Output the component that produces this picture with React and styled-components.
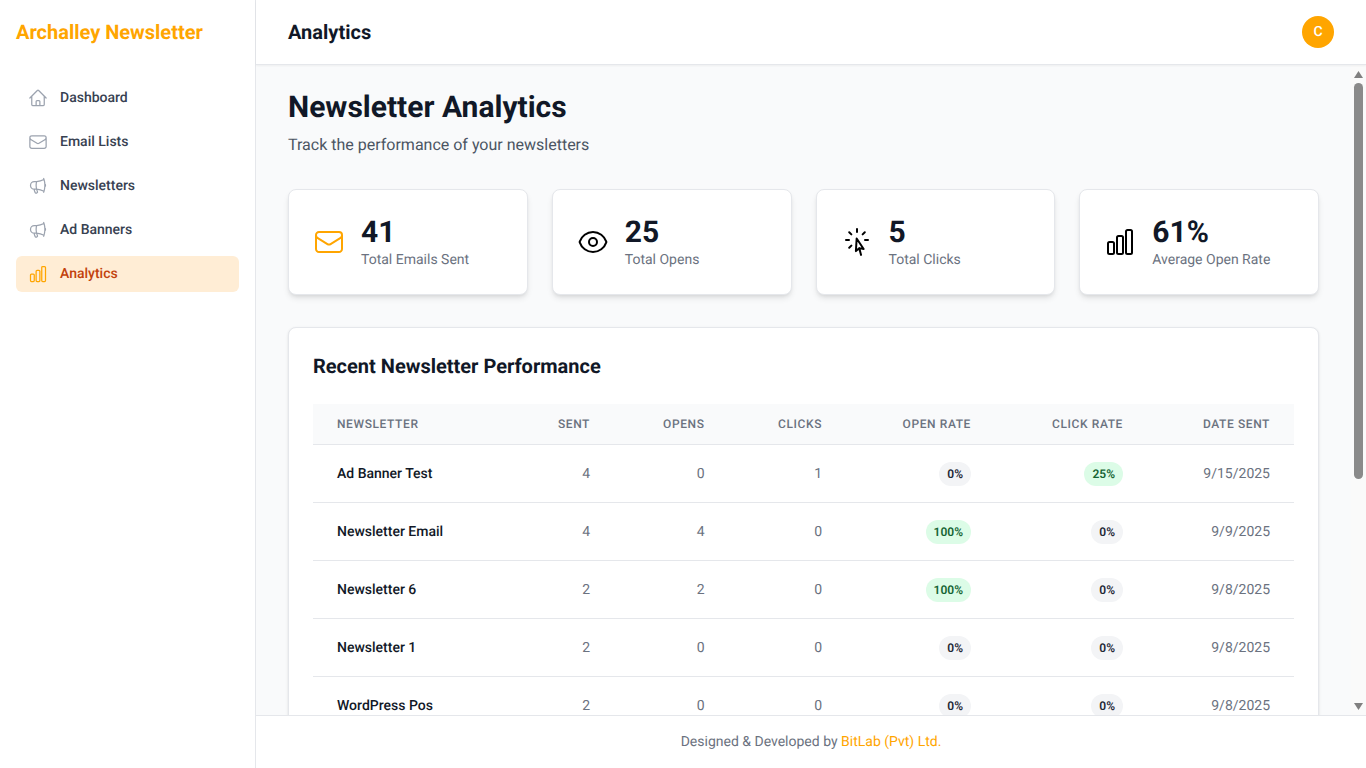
import React from "react";
import styled, { createGlobalStyle } from "styled-components";
import {
  HiOutlineHome,
  HiOutlineEnvelope,
  HiOutlineMegaphone,
  HiOutlineChartBar,
  HiOutlineEye,
  HiOutlineCursorArrowRays,
} from "react-icons/hi2";

const navItems = [
  { label: "Dashboard", icon: HiOutlineHome },
  { label: "Email Lists", icon: HiOutlineEnvelope },
  { label: "Newsletters", icon: HiOutlineMegaphone },
  { label: "Ad Banners", icon: HiOutlineMegaphone },
  { label: "Analytics", icon: HiOutlineChartBar, active: true },
];

const stats = [
  { value: "41", label: "Total Emails Sent", icon: HiOutlineEnvelope, color: "#ffa500" },
  { value: "25", label: "Total Opens", icon: HiOutlineEye, color: "#000" },
  { value: "5", label: "Total Clicks", icon: HiOutlineCursorArrowRays, color: "#000" },
  { value: "61%", label: "Average Open Rate", icon: HiOutlineChartBar, color: "#000" },
];

const rows = [
  ["Ad Banner Test", 4, 0, 1, 0, 25, "9/15/2025"],
  ["Newsletter Email", 4, 4, 0, 100, 0, "9/9/2025"],
  ["Newsletter 6", 2, 2, 0, 100, 0, "9/8/2025"],
  ["Newsletter 1", 2, 0, 0, 0, 0, "9/8/2025"],
  ["WordPress Pos", 2, 0, 0, 0, 0, "9/8/2025"],
];

const App = () => (
  <>
    <GlobalStyle />
    <Shell>
      <Sidebar>
        <Brand>Archalley Newsletter</Brand>
        <Nav>
          {navItems.map((item) => (
            <NavItem key={item.label} $active={item.active}>
              <item.icon />
              {item.label}
            </NavItem>
          ))}
        </Nav>
      </Sidebar>
      <Body>
        <Header>
          <HeaderTitle>Analytics</HeaderTitle>
          <Avatar>C</Avatar>
        </Header>
        <MainRow>
          <Main>
            <PageTitle>Newsletter Analytics</PageTitle>
            <PageSub>Track the performance of your newsletters</PageSub>
            <StatGrid>
              {stats.map((s) => (
                <StatCard key={s.label}>
                  <StatIcon $color={s.color}>
                    <s.icon />
                  </StatIcon>
                  <div>
                    <StatValue>{s.value}</StatValue>
                    <StatLabel>{s.label}</StatLabel>
                  </div>
                </StatCard>
              ))}
            </StatGrid>
            <TableCard>
              <TableTitle>Recent Newsletter Performance</TableTitle>
              <Table>
                <thead>
                  <tr>
                    <Th $left $width={190}>Newsletter</Th>
                    <Th $width={111}>Sent</Th>
                    <Th $width={114.5}>Opens</Th>
                    <Th $width={117.5}>Clicks</Th>
                    <Th $width={149}>Open Rate</Th>
                    <Th $width={152}>Click Rate</Th>
                    <Th $width={147}>Date Sent</Th>
                  </tr>
                </thead>
                <tbody>
                  {rows.map((r, i) => (
                    <tr key={i}>
                      <NameCell>{r[0]}</NameCell>
                      <Td>{r[1]}</Td>
                      <Td>{r[2]}</Td>
                      <Td>{r[3]}</Td>
                      <Td><Badge $good={r[4] > 0}>{r[4]}%</Badge></Td>
                      <Td><Badge $good={r[5] > 0}>{r[5]}%</Badge></Td>
                      <Td>{r[6]}</Td>
                    </tr>
                  ))}
                </tbody>
              </Table>
            </TableCard>
          </Main>
          <ScrollRail>
            <ScrollArrow>
              <svg width="9" height="7" viewBox="0 0 9 7"><path d="M4.5 0L9 7H0z" fill="#808080" /></svg>
            </ScrollArrow>
            <ScrollThumb />
            <ScrollSpacer />
            <ScrollArrow>
              <svg width="9" height="7" viewBox="0 0 9 7"><path d="M0 0h9L4.5 7z" fill="#808080" /></svg>
            </ScrollArrow>
          </ScrollRail>
        </MainRow>
        <Footer>
          Designed &amp; Developed by&nbsp;<FooterLink>BitLab (Pvt) Ltd.</FooterLink>
        </Footer>
      </Body>
    </Shell>
  </>
);

const GlobalStyle = createGlobalStyle`
  * { box-sizing: border-box; }
  html, body { margin: 0; height: 100%; overflow: hidden; }
  body {
    font-family: Roboto, "Liberation Sans", sans-serif;
    background: #fff;
    text-rendering: geometricPrecision;
  }
`;

const Shell = styled.div`
  display: flex;
  height: 100vh;
`;

const Sidebar = styled.aside`
  width: 256px;
  flex-shrink: 0;
  background: #fff;
  border-right: 1px solid #e5e7eb;
  padding: 0 16px;
`;

const Brand = styled.div`
  height: 64px;
  display: flex;
  align-items: center;
  font-size: 20px;
  font-weight: 700;
  color: #ffa500;
`;

const Nav = styled.nav`
  display: flex;
  flex-direction: column;
  gap: 8px;
  margin-top: 16px;
`;

const NavItem = styled.a`
  display: flex;
  align-items: center;
  gap: 12px;
  padding: 8px 12px;
  border-radius: 6px;
  font-size: 14px;
  line-height: 20px;
  font-weight: 500;
  color: ${(p) => (p.$active ? "#c2410c" : "#374151")};
  background: ${(p) => (p.$active ? "#ffedd5" : "transparent")};

  svg {
    width: 20px;
    height: 20px;
    flex-shrink: 0;
    color: ${(p) => (p.$active ? "#ffa500" : "#9ca3af")};
  }
`;

const Body = styled.div`
  flex: 1;
  min-width: 0;
  display: flex;
  flex-direction: column;
`;

const Header = styled.header`
  height: 65px;
  flex-shrink: 0;
  display: flex;
  align-items: center;
  justify-content: space-between;
  padding: 0 32px;
  background: #fff;
  border-bottom: 1px solid #e5e7eb;
  box-shadow: 0 1px 2px rgba(0, 0, 0, 0.05);
  z-index: 1;
`;

const HeaderTitle = styled.h2`
  margin: 0;
  font-size: 20px;
  font-weight: 700;
  color: #111827;
`;

const Avatar = styled.div`
  width: 32px;
  height: 32px;
  border-radius: 50%;
  background: #ffa500;
  color: #fff;
  font-size: 14px;
  line-height: 20px;
  font-weight: 500;
  display: flex;
  align-items: center;
  justify-content: center;
`;

const MainRow = styled.div`
  flex: 1;
  min-height: 0;
  display: flex;
  background: #f9fafb;
`;

const Main = styled.main`
  flex: 1;
  min-width: 0;
  overflow: hidden;
  padding: 24px 32px;
`;

const ScrollRail = styled.div`
  width: 15px;
  flex-shrink: 0;
  display: flex;
  flex-direction: column;
  align-items: center;
  background: #fafafa;
`;

const ScrollArrow = styled.div`
  height: 18px;
  flex-shrink: 0;
  display: flex;
  align-items: center;
  justify-content: center;
`;

const ScrollThumb = styled.div`
  width: 9px;
  height: 396px;
  flex-shrink: 0;
  background: #8a8a8a;
  border-radius: 5px;
`;

const ScrollSpacer = styled.div`
  flex: 1;
`;

const PageTitle = styled.h1`
  margin: 0;
  font-size: 30px;
  line-height: 38px;
  font-weight: 700;
  color: #111827;
`;

const PageSub = styled.p`
  margin: 6px 0 0;
  font-size: 16px;
  line-height: 24px;
  color: #4b5563;
`;

const StatGrid = styled.div`
  display: grid;
  grid-template-columns: repeat(4, 1fr);
  gap: 24px;
  margin-top: 32px;
`;

const StatCard = styled.div`
  display: flex;
  align-items: center;
  gap: 16px;
  padding: 24px;
  background: #fff;
  border: 1px solid #e5e7eb;
  border-radius: 8px;
  box-shadow: 0 4px 6px -1px rgba(0, 0, 0, 0.1), 0 2px 4px -2px rgba(0, 0, 0, 0.1);
`;

const StatIcon = styled.div`
  display: flex;
  color: ${(p) => p.$color};

  svg {
    width: 32px;
    height: 32px;
  }
`;

const StatValue = styled.div`
  font-size: 30px;
  line-height: 38px;
  margin-bottom: -2px;
  font-weight: 700;
  color: #111827;
`;

const StatLabel = styled.div`
  font-size: 14px;
  line-height: 20px;
  color: #6b7280;
`;

const TableCard = styled.section`
  margin-top: 32px;
  padding: 24px;
  background: #fff;
  border: 1px solid #e5e7eb;
  border-radius: 8px;
  box-shadow: 0 1px 3px rgba(0, 0, 0, 0.1), 0 1px 2px -1px rgba(0, 0, 0, 0.1);
`;

const TableTitle = styled.h3`
  margin: 0 0 24px;
  font-size: 20px;
  line-height: 28px;
  font-weight: 700;
  color: #111827;
`;

const Table = styled.table`
  width: 100%;
  table-layout: fixed;
  border-collapse: collapse;
`;

const Th = styled.th`
  width: ${(p) => p.$width}px;
  height: 40px;
  padding: 12px 24px;
  background: #f9fafb;
  border-bottom: 1px solid #e5e7eb;
  font-size: 12px;
  line-height: 16px;
  font-weight: 500;
  letter-spacing: 0.05em;
  text-transform: uppercase;
  white-space: nowrap;
  color: #6b7280;
  text-align: ${(p) => (p.$left ? "left" : "right")};
`;

const Td = styled.td`
  height: 58px;
  padding: 0 24px;
  border-bottom: 1px solid #e5e7eb;
  font-size: 14px;
  line-height: 20px;
  color: #6b7280;
  text-align: right;
`;

const NameCell = styled(Td)`
  font-weight: 500;
  color: #111827;
  text-align: left;
  white-space: nowrap;
`;

const Badge = styled.span`
  display: inline-block;
  padding: 4px 8px;
  border-radius: 9999px;
  font-size: 12px;
  line-height: 16px;
  font-weight: 600;
  background: ${(p) => (p.$good ? "#dcfce7" : "#f3f4f6")};
  color: ${(p) => (p.$good ? "#166534" : "#1f2937")};
`;

const Footer = styled.footer`
  height: 53px;
  flex-shrink: 0;
  display: flex;
  align-items: center;
  justify-content: center;
  background: #fff;
  border-top: 1px solid #e5e7eb;
  font-size: 14px;
  line-height: 20px;
  color: #6b7280;
`;

const FooterLink = styled.span`
  color: #ffa500;
`;

export default App;
